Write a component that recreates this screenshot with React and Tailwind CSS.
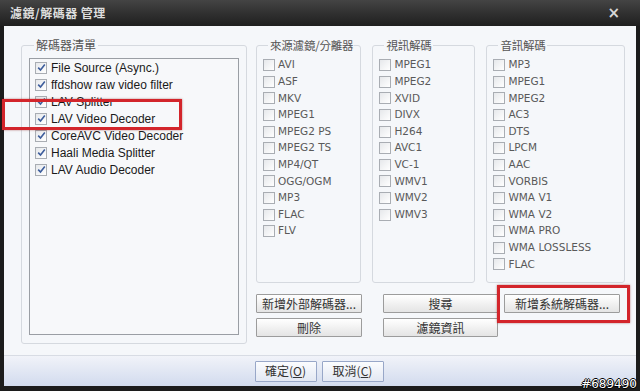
import React from 'react';

const CJK = { fontFamily: '"Noto Sans CJK TC", "Noto Sans CJK SC", sans-serif' };

const decoders = [
  'File Source (Async.)',
  'ffdshow raw video filter',
  'LAV Splitter',
  'LAV Video Decoder',
  'CoreAVC Video Decoder',
  'Haali Media Splitter',
  'LAV Audio Decoder',
];

const groups = [
  { title: '來源濾鏡/分離器', w: 'w-[103px]', items: ['AVI', 'ASF', 'MKV', 'MPEG1', 'MPEG2 PS', 'MPEG2 TS', 'MP4/QT', 'OGG/OGM', 'MP3', 'FLAC', 'FLV'] },
  { title: '視訊解碼', w: 'w-[103px]', items: ['MPEG1', 'MPEG2', 'XVID', 'DIVX', 'H264', 'AVC1', 'VC-1', 'WMV1', 'WMV2', 'WMV3'] },
  { title: '音訊解碼', w: 'w-[139px]', items: ['MP3', 'MPEG1', 'MPEG2', 'AC3', 'DTS', 'LPCM', 'AAC', 'VORBIS', 'WMA V1', 'WMA V2', 'WMA PRO', 'WMA LOSSLESS', 'FLAC'] },
];

function Box({ checked }) {
  return (
    <span className="w-[12px] h-[12px] shrink-0 border border-[#a9adb3] bg-gradient-to-br from-[#e6e8eb] to-white flex items-center justify-center">
      {checked && (
        <svg width="9" height="9" viewBox="0 0 9 9">
          <path d="M1.2 4.6 L3.5 7 L7.8 1.5" fill="none" stroke="#3d5d9c" strokeWidth="1.6" />
        </svg>
      )}
    </span>
  );
}

function Btn({ w, children }) {
  return (
    <button
      className={`${w} h-[19px] border border-[#9c9c9c] rounded-[1px] bg-gradient-to-b from-white to-[#e4e4e4] text-[12px] text-[#333] flex items-center justify-center leading-none`}
      style={CJK}
    >
      {children}
    </button>
  );
}

function Group({ title, w, items }) {
  return (
    <fieldset className={`${w} h-[246px] border border-[#d5d9df] rounded-[3px] px-[6px]`}>
      <legend className="ml-[5px] pl-[2px] pr-[1px] text-[11.5px] leading-[16px] text-[#555] whitespace-nowrap tracking-[-0.2px]" style={CJK}>{title}</legend>
      <div className="pt-[4px] flex flex-col">
        {items.map((t, i) => (
          <div key={i} className="h-[16.6px] flex items-center gap-[3px]">
            <Box />
            <span className="text-[#595959] whitespace-nowrap" style={{ fontFamily: '"DejaVu Sans", sans-serif', fontSize: '10.5px' }}>{t}</span>
          </div>
        ))}
      </div>
    </fieldset>
  );
}

export default function App() {
  return (
    <div className="relative w-[640px] h-[391px] overflow-hidden bg-[#1c1c1c] flex flex-col">
      <div className="h-[26px] shrink-0 bg-gradient-to-b from-[#444] to-[#1f1f1f] flex items-center justify-between pl-[10px] pr-[20px]">
        <span className="text-[12px] font-bold text-[#dedede] tracking-[0.5px]" style={CJK}>濾鏡/解碼器 管理</span>
        <span className="text-[15px] font-bold text-[#d8d8d8] leading-none" style={{ fontFamily: '"DejaVu Sans", sans-serif' }}>×</span>
      </div>

      <div className="flex-1 mx-[4px] mb-[5px] bg-[#f5f7fa] flex flex-col">
        <div className="h-[329px] pt-[11px] pl-[17px] flex gap-[9px]">
          <fieldset className="w-[226px] h-[307px] border border-[#d5d9df] rounded-[3px] px-[7px] pb-[8px] flex flex-col">
            <legend className="ml-[5px] px-[2px] text-[12px] leading-[16px] text-[#555]" style={CJK}>解碼器清單</legend>
            <div className="mt-[5px] flex-1 border border-[#9a9ea4] bg-[#f7f8fa] pl-[5px] flex flex-col">
              {decoders.map((d, i) => (
                <div key={i} className="h-[17px] flex items-center gap-[4px]">
                  <Box checked />
                  <span className="text-[12px] text-[#1a1a1a] whitespace-nowrap" style={{ fontFamily: '"Liberation Sans", Arial, sans-serif' }}>{d}</span>
                </div>
              ))}
            </div>
          </fieldset>

          <div className="flex flex-col">
            <div className="flex gap-[11px]">
              {groups.map(g => (
                <Group key={g.title} {...g} />
              ))}
            </div>
            <div className="mt-[11px] flex gap-[21px]">
              <div className="flex flex-col gap-[5px]">
                <Btn w="w-[106px]">新增外部解碼器...</Btn>
                <Btn w="w-[106px]">刪除</Btn>
              </div>
              <div className="flex flex-col gap-[5px]">
                <Btn w="w-[115px]">搜尋</Btn>
                <Btn w="w-[115px]">濾鏡資訊</Btn>
              </div>
              <div className="-ml-[15px]">
                <Btn w="w-[116px]">新增系統解碼器...</Btn>
              </div>
            </div>
          </div>
        </div>

        <div className="flex-1 border-t border-[#d8dce4] bg-gradient-to-b from-[#f1f3f9] to-[#d2dbee] flex items-center justify-center gap-[5px] pr-[2px]">
          <button className="w-[62px] h-[21px] border border-[#98a7c8] rounded-[1px] bg-gradient-to-b from-[#fbfcfe] to-[#e3e8f3] text-[12px] text-[#333]" style={CJK}>
            確定(<span className="underline">O</span>)
          </button>
          <button className="w-[62px] h-[21px] border border-[#98a7c8] rounded-[1px] bg-gradient-to-b from-[#fbfcfe] to-[#e3e8f3] text-[12px] text-[#333]" style={CJK}>
            取消(<span className="underline">C</span>)
          </button>
        </div>
      </div>

      <div className="absolute left-[2px] top-[99px] w-[180px] h-[31px] border-[3px] border-[#d3252b] shadow-[0_0_2px_rgba(120,0,0,0.5)]" />
      <div className="absolute left-[497px] top-[285px] w-[133px] h-[38px] border-[3px] border-[#d3252b] shadow-[0_0_2px_rgba(120,0,0,0.5)]" />

      <div
        className="absolute right-[3px] bottom-[0px] text-[12px] leading-[14px] text-white"
        style={{ fontFamily: '"DejaVu Sans", sans-serif', textShadow: '1px 0 #000, -1px 0 #000, 0 1px #000, 0 -1px #000' }}
      >
        #689490
      </div>
    </div>
  );
}
